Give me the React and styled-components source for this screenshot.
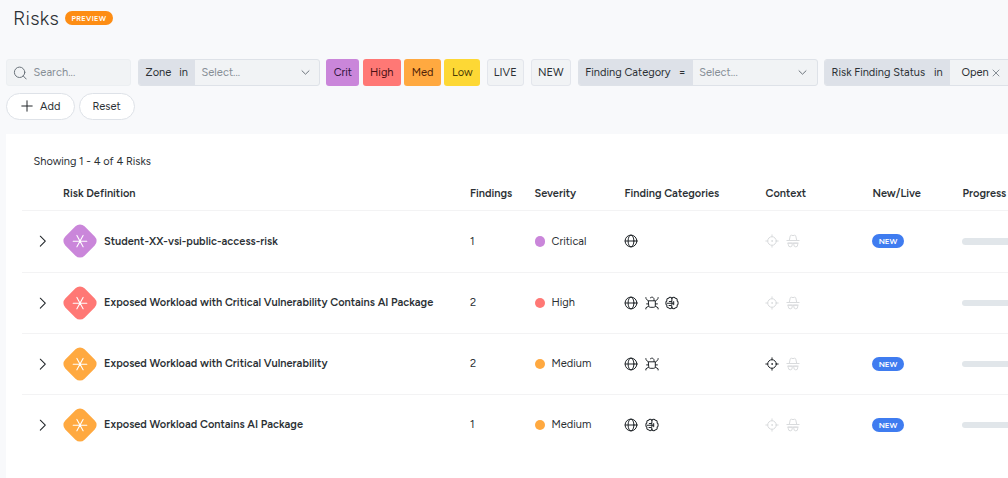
import React from "react";
import styled, { createGlobalStyle } from "styled-components";

const Global = createGlobalStyle`
  * { box-sizing: border-box; }
  html, body { margin: 0; height: 478px; overflow: hidden; background: #f8f9fb; }
  body { font-family: Figtree, Inter, "Liberation Sans", sans-serif; font-size: 11px; color: #2b3034; }
`;
const Page = styled.div`
  width: 1008px; height: 478px; overflow: hidden; padding-left: 6px;
  display: flex; flex-direction: column;
`;
const T = styled.span`
  white-space: nowrap; flex: none; letter-spacing: ${(p) => p.$ls || 0}px;
`;
const Header = styled.header`
  height: 59px; padding: 8px 0 0 7px; display: flex; align-items: flex-start; gap: 7px;
`;
const Title = styled.h1`
  margin: 0; font-size: 20px; line-height: 21px; font-weight: 300; letter-spacing: 0.25px; width: 45px;
`;
const Preview = styled.span`
  margin-top: 3px; width: 48px; height: 14px; border-radius: 7px; background: #fd8d14; color: #fff;
  font-size: 7.5px; font-weight: 600; letter-spacing: 0.3px; padding-top: 0.5px;
  display: flex; align-items: center; justify-content: center;
`;
const Filters = styled.div`
  display: flex; height: 27px; width: 1100px; flex: none;
`;
const Field = styled.div`
  display: flex; align-items: center; width: ${(p) => p.$w}px; height: 27px; flex: none; margin-right: ${(p) => p.$mr || 7}px;
  background: #f1f3f5; border: 1px solid #dee2e8; border-radius: 3px; overflow: hidden; color: #868e96;
`;
const Search = styled(Field)`
  border-color: #eceff2; padding-left: 6px; gap: 6.5px;
`;
const FieldLabel = styled.div`
  width: ${(p) => p.$w}px; height: 100%; background: #dde1e8; color: #2b3034; padding: 0 7px 0 6.5px;
  display: flex; align-items: center; justify-content: space-between; flex: none;
`;
const FieldValue = styled.div`
  flex: 1; padding: 0 9.5px 0 6.5px; display: flex; align-items: center; justify-content: space-between;
`;
const Chosen = styled.div`
  padding-left: 12px; color: #2b3034; display: flex; align-items: center; gap: 3px;
`;
const Severities = styled.div`
  display: flex; gap: 3.5px; margin: 0 6.2px 0 -0.7px;
`;
const Chip = styled.div`
  width: ${(p) => p.$w}px; height: 27px; border-radius: 3px; flex: none;
  background: ${(p) => p.$bg}; color: ${(p) => p.$fg};
  display: flex; align-items: center; justify-content: center;
`;
const Toggle = styled(Chip)`
  background: #f1f3f5; color: #2b3034; border: 1px solid #e3e6ec; margin-right: 7px;
`;
const Actions = styled.div`
  display: flex; gap: 3.5px; padding-top: 6.5px; height: 47.5px; flex: none;
`;
const Pill = styled.button`
  width: ${(p) => p.$w}px; height: 27.5px; border-radius: 14px; border: 1px solid #dee2e8; background: #fff;
  padding: 0; font: inherit; color: inherit; display: flex; align-items: center; justify-content: center; gap: 7.5px;
`;
const Panel = styled.main`
  flex: 1; background: #fff; padding: 21px 0 0 16px; 
`;
const Showing = styled.div`
  height: 14px; line-height: 14px; padding-left: 11.5px;
`;
const Row = styled.div`
  display: grid; width: 1040px;
  grid-template-columns: 41px 407px 64.5px 90px 141px 107px 90px 1fr;
  align-items: center; height: ${(p) => (p.$first ? 62 : 61)}px; border-bottom: 1px solid ${(p) => (p.$last ? "transparent" : "#f3f3f4")};
`;
const HeadRow = styled(Row)`
  height: 42.4px; padding-top: 8.6px; font-weight: 600;
`;
const Cell = styled.div`
  display: flex; align-items: center; gap: ${(p) => p.$gap || 0}px; padding-left: ${(p) => p.$pl || 0}px;
`;
const Icons = styled(Cell)`
  margin-left: -0.5px; gap: 6.5px;
`;
const RiskCell = styled(Cell)`
  margin-left: -0.5px; gap: 7.5px;
`;
const Name = styled(T)`
  font-weight: 600; letter-spacing: 0.015px;
`;
const Dot = styled.i`
  width: 10.5px; height: 10.5px; border-radius: 50%; background: ${(p) => p.$c}; flex: none;
`;
const NewBadge = styled.span`
  width: 32px; height: 14px; border-radius: 7px; background: #3f7cf0; color: #fff; font-size: 8px; font-weight: 600;
  margin-left: -0.5px; display: flex; align-items: center; justify-content: center;
`;
const Bar = styled.div`
  height: 6.5px; width: 100%; margin-left: -0.5px; border-radius: 4px; background: #e1e6ea;
`;
const Drawing = styled.svg`
  flex: none; display: block;
`;

const Svg = ({ size = 14, color = "#22272b", sw = 1, box = 14, children }) => (
  <Drawing width={size} height={size} viewBox={`0 0 ${box} ${box}`} fill="none" stroke={color}
    strokeWidth={sw} strokeLinecap="round" strokeLinejoin="round">{children}</Drawing>
);
const Magnifier = () => <Svg color="#6b737b"><circle cx="6.6" cy="6.3" r="5.2" /><path d="M10.3 10l2.9 3" /></Svg>;
const Down = () => <Svg size={9} box={9} color="#6b737b"><path d="M1 2.8l3.5 3.4L8 2.8" /></Svg>;
const Cross = () => <Svg size={8} box={8} color="#7b838b" sw={0.9}><path d="M1 1l6 6M7 1L1 7" /></Svg>;
const Plus = () => <Svg size={12} box={12}><path d="M6 .8v10.4M.8 6h10.4" /></Svg>;
const Right = () => <Svg size={12} box={12} sw={1.05}><path d="M3.3 1.2L8.3 6.2l-5 5" /></Svg>;
const Globe = () => (
  <Svg><circle cx="7" cy="7" r="5.9" /><ellipse cx="7" cy="7" rx="2.9" ry="5.9" /><path d="M1.1 7h11.8" /></Svg>
);
const Bug = () => (
  <Svg>
    <path d="M3.7 4.8h6.6v5c0 .9-.7 1.5-1.5 1.5H5.2c-.8 0-1.5-.6-1.5-1.5zM5.3 1.9C6 1.1 7.2.9 8.1 1.5c.7.4.9 1.1.9 1.8v1.3" />
    <path d="M.9 1.6v1l2.7 2.6M13.1 1.6v1l-2.7 2.6M1.6 7.9h2M10.4 7.9h2M.9 13v-1.2l2.8-1.7M13.1 13v-1.2l-2.8-1.7" />
  </Svg>
);
const Brain = () => (
  <Svg sw={1.05}>
    <path d="M6.9 2.4C6.1 1 4.3 1 3.6 2.2 2.2 2.3 1.5 3.5 1.9 4.7.5 5.6.5 8.4 1.9 9.3c-.4 1.2.3 2.4 1.7 2.5.7 1.2 2.5 1.2 3.3-.2" />
    <path d="M6.9 2.2C7.8.9 9.6.9 10.4 2.2c1.4.1 2.1 1.3 1.7 2.5 1.4.9 1.4 3.7 0 4.6.4 1.2-.3 2.4-1.7 2.5-.8 1.3-2.6 1.3-3.5 0" />
    <path d="M6.9 2.4v2.1c0 .7-.5 1-1.2 1H4.3M2.3 7.2h6.2M4 9.4h1.7c.7 0 1.2.3 1.2 1v1.3M6.9 5.8v2.9M8.7 5.6v3" />
  </Svg>
);
const Target = ({ color }) => (
  <Svg color={color}><circle cx="7" cy="7" r="4.3" /><circle cx="7" cy="7" r=".35" />
    <path d="M7 .8v2M7 11.2v2M.8 7h2M11.2 7h2" /></Svg>
);
const Spy = () => (
  <Svg color="#d9dbdd">
    <path d="M.9 6.5h12.2M3.3 6.3l.9-4.2c.2-.9.9-1 1.5-.8.9.4 1.7.4 2.6 0 .6-.2 1.3-.1 1.5.8l.9 4.2" />
    <path d="M1.8 9.1h10.4M2.3 9.2h3.9v1.7a1.95 1.95 0 0 1-3.9 0zM7.8 9.2h3.9v1.7a1.95 1.95 0 0 1-3.9 0z" />
  </Svg>
);
const Diamond = ({ color }) => (
  <Drawing width="34" height="34" viewBox="0 0 34 34">
    <rect x="3.4" y="3.4" width="27.2" height="27.2" rx="6.4" fill={color} transform="rotate(45 17 17)" />
    <path d="M10.2 17.2h13.6M13.9 11.4l6.2 11.4M20.1 11.4l-6.2 11.4" fill="none" stroke="#fff" strokeWidth="1.1" strokeLinecap="round" />
  </Drawing>
);
const icons = { globe: Globe, bug: Bug, brain: Brain };

const risks = [
  { name: "Student-XX-vsi-public-access-risk", n: 1, sev: "Critical", c: "#ca86da", cats: ["globe"], isNew: true },
  { name: "Exposed Workload with Critical Vulnerability Contains AI Package", n: 2, sev: "High", c: "#ff7875", cats: ["globe", "bug", "brain"] },
  { name: "Exposed Workload with Critical Vulnerability", n: 2, sev: "Medium", c: "#ffa940", cats: ["globe", "bug"], target: true, isNew: true },
  { name: "Exposed Workload Contains AI Package", n: 1, sev: "Medium", c: "#ffa940", cats: ["globe", "brain"], isNew: true },
];
const heads = ["", "Risk Definition", "Findings", "Severity", "Finding Categories", "Context", "New/Live", "Progress"];

export default function App() {
  return (
    <Page>
      <Global />
      <Header><Title>Risks</Title><Preview>PREVIEW</Preview></Header>
      <Filters>
        <Search $w={125}><Magnifier /><T $ls={0.08}>Search...</T></Search>
        <Field $w={182}>
          <FieldLabel $w={56}><T $ls={0.08}>Zone</T><T>in</T></FieldLabel>
          <FieldValue><T $ls={0.05}>Select...</T><Down /></FieldValue>
        </Field>
        <Severities>
          <Chip $w={33} $bg="#ca86da" $fg="#2c1238"><T>Crit</T></Chip>
          <Chip $w={38} $bg="#ff7875" $fg="#4a1013"><T>High</T></Chip>
          <Chip $w={36.5} $bg="#ffa940" $fg="#522407"><T>Med</T></Chip>
          <Chip $w={36} $bg="#fdd835" $fg="#4a3c05"><T>Low</T></Chip>
        </Severities>
        <Toggle $w={37.5}><T>LIVE</T></Toggle>
        <Toggle $w={39.7}><T>NEW</T></Toggle>
        <Field $w={240} $mr={6.4}>
          <FieldLabel $w={114}><T $ls={0.03}>Finding Category</T><T>=</T></FieldLabel>
          <FieldValue><T $ls={0.05}>Select...</T><Down /></FieldValue>
        </Field>
        <Field $w={220}>
          <FieldLabel $w={124.5}><T>Risk Finding Status</T><T>in</T></FieldLabel>
          <Chosen><T>Open</T><Cross /></Chosen>
        </Field>
      </Filters>
      <Actions>
        <Pill $w={69}><Plus /><T>Add</T></Pill>
        <Pill $w={56}><T>Reset</T></Pill>
      </Actions>
      <Panel>
        <Showing><T>Showing 1 - 4 of 4 Risks</T></Showing>
        <HeadRow>{heads.map((h) => <Cell key={h}><T>{h}</T></Cell>)}</HeadRow>
        {risks.map((r, i) => (
          <Row key={r.name} $first={i === 0} $last={i === 3}>
            <Cell $pl={15}><Right /></Cell>
            <RiskCell><Diamond color={r.c} /><Name>{r.name}</Name></RiskCell>
            <Cell><T>{r.n}</T></Cell>
            <Cell $gap={6.5}><Dot $c={r.c} /><T>{r.sev}</T></Cell>
            <Icons>{r.cats.map((k) => { const I = icons[k]; return <I key={k} />; })}</Icons>
            <Icons><Target color={r.target ? "#22272b" : "#d9dbdd"} /><Spy /></Icons>
            <Cell>{r.isNew && <NewBadge>NEW</NewBadge>}</Cell>
            <Cell><Bar /></Cell>
          </Row>
        ))}
      </Panel>
    </Page>
  );
}
